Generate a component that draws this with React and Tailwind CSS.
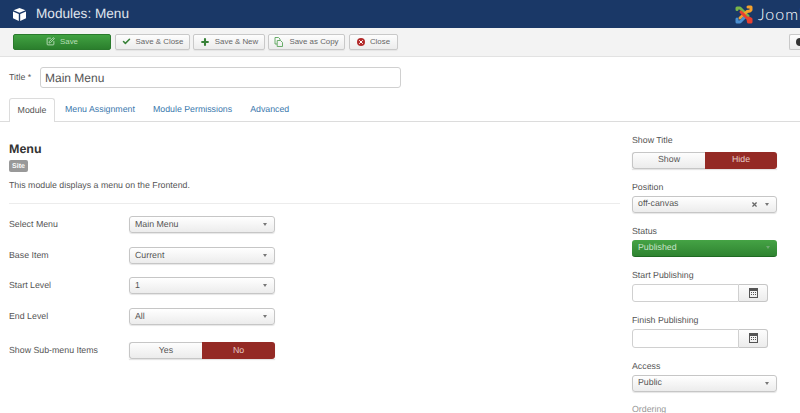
import { Check, Plus, SquarePen, X } from "lucide-react";

const font = "font-['Liberation_Sans',Arial,sans-serif] [text-rendering:geometricPrecision]";

function Caret({ light }) {
  return (
    <span className={`w-0 h-0 border-x-[2.5px] border-x-transparent border-t-[3px] ${light ? "border-t-[#6fa873]" : "border-t-[#777]"}`} />
  );
}

function ToolButton({ icon, children, width }) {
  return (
    <button className={`${width} h-[16px] flex items-center justify-center gap-[5px] rounded-[2px] border border-[#c9c9c9] bg-gradient-to-b from-[#fdfdfd] to-[#ececec] text-[7.9px] text-[#666] shadow-[0_1px_1px_rgba(0,0,0,0.06)]`}>
      {icon}
      {children}
    </button>
  );
}

function Select({ value, width = "w-[146px]" }) {
  return (
    <div className={`${width} h-[17px] flex items-center justify-between pl-[5px] pr-[7px] rounded-[3px] border border-[#c6c6c6] bg-gradient-to-b from-[#ffffff] to-[#ececec] text-[8.8px] text-[#555] shadow-[0_1px_1px_rgba(0,0,0,0.1)]`}>
      <span>{value}</span>
      <Caret />
    </div>
  );
}

function Toggle({ left, right, leftWidth, rightWidth }) {
  return (
    <div className="flex h-[17px] text-[8.8px] shadow-[0_1px_1px_rgba(0,0,0,0.1)]">
      <div className={`${leftWidth} flex items-center justify-center rounded-l-[3px] border border-r-0 border-[#c6c6c6] bg-gradient-to-b from-[#fdfdfd] to-[#ececec] text-[#555]`}>{left}</div>
      <div className={`${rightWidth} flex items-center justify-center rounded-r-[3px] bg-[#942a25] text-[#e6c9c7]`}>{right}</div>
    </div>
  );
}

function FormRow({ label, children, className = "" }) {
  return (
    <div className={`flex items-center h-[17px] ${className}`}>
      <span className="w-[120px] text-[8.8px] text-[#555]">{label}</span>
      {children}
    </div>
  );
}

function CalendarIcon() {
  return (
    <svg width="9" height="10" viewBox="0 0 9 10" fill="#555">
      <path d="M0 0h9v10H0zM1 3v6h7V3z" fillRule="evenodd" />
      <path d="M2 4h1v1H2zM4 4h1v1H4zM6 4h1v1H6zM2 6h1v1H2zM4 6h1v1H4zM6 6h1v1H6z" />
    </svg>
  );
}

function SideField({ label, gap = "gap-[3px]", children }) {
  return (
    <div className={`flex flex-col ${gap}`}>
      <span className="text-[8.8px] leading-[11px] text-[#555]">{label}</span>
      {children}
    </div>
  );
}

function DateField({ label }) {
  return (
    <SideField label={label}>
      <div className="flex h-[18.5px] w-[136px]">
        <div className="w-[107px] rounded-l-[3px] border border-[#d0d0d0] bg-white" />
        <div className="flex-1 flex items-center justify-center rounded-r-[3px] border border-l-0 border-[#c6c6c6] bg-gradient-to-b from-[#fdfdfd] to-[#ececec]">
          <CalendarIcon />
        </div>
      </div>
    </SideField>
  );
}

function JoomlaLogo() {
  return (
    <svg width="18" height="19" viewBox="0 0 18 19" fill="none" strokeWidth="3" strokeLinecap="round" strokeLinejoin="round" className="shrink-0">
      <path d="M2 4.5V3h3l8 8" stroke="#7ab648" />
      <path d="M13 2h3v3l-1 1-3 .5L5 13" stroke="#f4a12d" />
      <path d="M2 14v3h3l3-3 2.5-2.5" stroke="#4c8fd0" />
      <path d="M6 7l7 7 .5 3H16v-3l-2-1" stroke="#e8402f" />
    </svg>
  );
}

function CopyIcon() {
  return (
    <svg width="10" height="10" viewBox="0 0 10 10" fill="none" stroke="#5aa55a" strokeWidth="0.9">
      <path d="M1 .5h3.5L6 2v1.5M1 .5v6.5h2" />
      <path d="M3.2 3.5h3.3l2 2v4h-5.3z" />
    </svg>
  );
}

export default function App() {
  return (
    <div className={`${font} w-[800px] h-[413px] overflow-hidden bg-white`}>
      {/* Header */}
      <header className="h-[28px] bg-[#1a3867] flex items-center pl-[13px] overflow-hidden">
        <svg width="13" height="13" viewBox="0 0 13 13" fill="#fff" className="shrink-0">
          <path d="M6.5 0L12.5 2.3 6.5 4.8 .5 2.3z" />
          <path d="M0 3.6l5.8 2.4V13L0 10.2zM13 3.6L7.2 6v7l5.8-2.8z" />
        </svg>
        <h1 className="ml-[10px] text-[13.6px] text-[#e0e6ee]">Modules: Menu</h1>
        <div className="ml-auto flex items-center gap-[5px] w-[65px] shrink-0 overflow-hidden">
          <JoomlaLogo />
          <span className="font-['Lato',sans-serif] font-light text-[16px] leading-[19px] tracking-[1px] text-white whitespace-nowrap">Joomla!</span>
        </div>
      </header>

      {/* Toolbar */}
      <div className="h-[29px] bg-[#f3f3f3] border-b border-[#e2e2e2] flex items-center pl-[13px] gap-[3px] pb-[1px] overflow-hidden">
        <button className="w-[98px] h-[16px] flex items-center justify-center gap-[5px] rounded-[2px] bg-gradient-to-b from-[#41a242] to-[#2b7f2d] border border-[#2a7a2c] text-[7.9px] text-[#b5dcb5] mr-[1px]">
          <SquarePen size={9} strokeWidth={2} className="text-[#d5ecd5]" />
          Save
        </button>
        <ToolButton width="w-[75px]" icon={<Check size={9} strokeWidth={4} className="text-[#378137]" />}>Save &amp; Close</ToolButton>
        <ToolButton width="w-[72px]" icon={<Plus size={10} strokeWidth={5} className="text-[#378137]" />}>Save &amp; New</ToolButton>
        <ToolButton width="w-[77px]" icon={<CopyIcon />}>Save as Copy</ToolButton>
        <div className="ml-[1px]">
          <ToolButton width="w-[49px]" icon={<span className="w-[8px] h-[8px] rounded-full bg-[#b32a2a] flex items-center justify-center"><X size={6} strokeWidth={4} className="text-white" /></span>}>Close</ToolButton>
        </div>
        <div className="ml-auto w-[11px] h-[16px] shrink-0 flex items-center pl-[6px] overflow-hidden rounded-l-[2px] border border-r-0 border-[#c9c9c9] bg-gradient-to-b from-[#fdfdfd] to-[#ececec]">
          <span className="w-[8px] h-[8px] shrink-0 rounded-full bg-[#333]" />
        </div>
      </div>

      {/* Title */}
      <div className="flex items-center h-[21px] mt-[10px] pl-[9px]">
        <span className="w-[31px] text-[8.8px] text-[#555]">Title *</span>
        <div className="w-[361px] h-[21px] flex items-center pl-[4px] rounded-[3px] border border-[#d0d0d0] text-[12px] text-[#555]">Main Menu</div>
      </div>

      {/* Tabs */}
      <nav className="mt-[10px] h-[24px] flex pl-[9px] border-b border-[#dcdcdc] text-[8.8px] text-[#3a78ad]">
        <div className="w-[46px] h-[24px] flex items-center justify-center rounded-t-[3px] border border-b-0 border-[#dcdcdc] bg-white text-[#555]">Module</div>
        <div className="ml-[10px] flex items-center">Menu Assignment</div>
        <div className="ml-[18px] flex items-center">Module Permissions</div>
        <div className="ml-[18px] flex items-center">Advanced</div>
      </nav>

      {/* Content */}
      <main className="flex pl-[9px]">
        <section className="w-[611px] pt-[20px]">
          <h2 className="text-[12.5px] leading-[15px] font-bold text-[#333]">Menu</h2>
          <span className="block mt-[3px] h-[12px] w-[19px] rounded-[2px] bg-[#999] text-center text-[7px] leading-[13px] font-bold text-white">Site</span>
          <p className="mt-[8px] text-[8.8px] leading-[11px] text-[#555]">This module displays a menu on the Frontend.</p>
          <hr className="mt-[12px] border-[#ececec]" />
          <div className="mt-[12px] flex flex-col gap-[13.7px]">
            <FormRow label="Select Menu"><Select value="Main Menu" /></FormRow>
            <FormRow label="Base Item"><Select value="Current" /></FormRow>
            <FormRow label="Start Level"><Select value="1" /></FormRow>
            <FormRow label="End Level"><Select value="All" /></FormRow>
            <FormRow label="Show Sub-menu Items" className="mt-[3px]">
              <Toggle left="Yes" right="No" leftWidth="w-[73px]" rightWidth="w-[73px]" />
            </FormRow>
          </div>
        </section>

        <aside className="ml-[12px] w-[145px] pt-[13px] flex flex-col gap-[13px]">
          <SideField label="Show Title" gap="gap-[5.5px]">
            <Toggle left="Show" right="Hide" leftWidth="w-[73px]" rightWidth="w-[72px]" />
          </SideField>
          <SideField label="Position">
            <div className="h-[17px] flex items-center justify-between pl-[5px] pr-[7px] rounded-[3px] border border-[#c6c6c6] bg-gradient-to-b from-[#ffffff] to-[#ececec] text-[8.8px] text-[#555] shadow-[0_1px_1px_rgba(0,0,0,0.1)]">
              <span>off-canvas</span>
              <span className="flex items-center gap-[7px]"><X size={7} strokeWidth={4} className="text-[#666]" /><Caret /></span>
            </div>
          </SideField>
          <SideField label="Status">
            <div className="h-[17px] flex items-center justify-between pl-[6px] pr-[7px] rounded-[3px] bg-gradient-to-b from-[#45a345] to-[#2f8431] border-b border-[#1f6a22] text-[8.8px] text-[#c9e4c9]">
              <span>Published</span>
              <Caret light />
            </div>
          </SideField>
          <DateField label="Start Publishing" />
          <DateField label="Finish Publishing" />
          <SideField label="Access"><Select value="Public" width="w-[145px]" /></SideField>
          <span className="-mt-[1px] text-[8.8px] leading-[11px] text-[#999]">Ordering</span>
        </aside>
      </main>
    </div>
  );
}
